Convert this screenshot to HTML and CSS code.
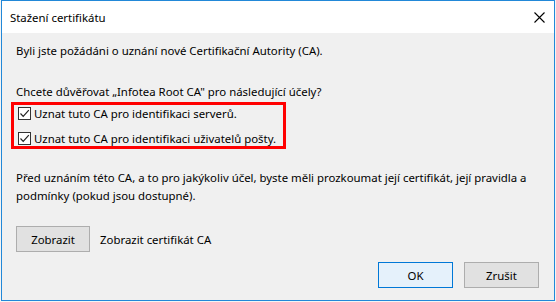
FILE: index.html
```html
<!DOCTYPE html>
<html lang="cs">
<head>
  <meta charset="UTF-8" />
  <meta name="viewport" content="width=device-width, initial-scale=1.0"/>
  <title>Stažení certifikátu</title>
  <link rel="stylesheet" href="styles.css">
</head>
<body>
  <div class="dialog">
    <div class="titlebar">
      <span class="title">Stažení certifikátu</span>
      <svg class="close" width="11" height="11" viewBox="0 0 11 11">
        <path d="M0.5 0.5 L10.5 10.5 M10.5 0.5 L0.5 10.5" stroke="#000" stroke-width="1.1" fill="none"/>
      </svg>
    </div>

    <div class="content">
      <p class="intro">Byli jste požádáni o uznání nové Certifikační Autority (CA).</p>
      <p class="question">Chcete důvěřovat „Infotea Root CA" pro následující účely?</p>

      <div class="highlight">
        <label class="check-row">
          <span class="checkbox">
            <svg width="11" height="11" viewBox="0 0 11 11"><path d="M1.5 5.5 L4.2 8.3 L9.8 2.2" stroke="#222" stroke-width="1.2" fill="none"/></svg>
          </span>
          Uznat tuto CA pro identifikaci serverů.
        </label>
        <label class="check-row">
          <span class="checkbox">
            <svg width="11" height="11" viewBox="0 0 11 11"><path d="M1.5 5.5 L4.2 8.3 L9.8 2.2" stroke="#222" stroke-width="1.2" fill="none"/></svg>
          </span>
          Uznat tuto CA pro identifikaci uživatelů pošty.
        </label>
      </div>

      <p class="note">Před uznáním této CA, a to pro jakýkoliv účel, byste měli prozkoumat její certifikát, její pravidla a podmínky (pokud jsou dostupné).</p>

      <div class="view-row">
        <button class="btn">Zobrazit</button>
        <span>Zobrazit certifikát CA</span>
      </div>

      <div class="actions">
        <button class="btn btn-default">OK</button>
        <button class="btn">Zrušit</button>
      </div>
    </div>
  </div>
</body>
</html>
```
FILE: styles.css
```css
html, body {
  margin: 0;
  padding: 0;
  background: #f4f4f4;
}

body {
  font-family: 'Noto Sans', 'Segoe UI', sans-serif;
  font-size: 11.4px;
  color: #000;
}

.dialog {
  margin-left: 1px;
  width: 554px;
  height: 301px;
  box-sizing: border-box;
  border: 1px solid #2288d8;
  display: flex;
  flex-direction: column;
  background: #f0f0f0;
}

.titlebar {
  height: 31px;
  flex-shrink: 0;
  background: #fff;
  display: flex;
  align-items: center;
  justify-content: space-between;
  padding: 1px 9px 0 8px;
}

.title {
  line-height: 16px;
}

.close {
  display: block;
  margin-right: 0;
}

.content {
  flex: 1;
  padding: 10px 15px 0 14px;
  display: flex;
  flex-direction: column;
}

p {
  margin: 0;
  line-height: 16px;
}

.question {
  margin-top: 25px;
}

.highlight {
  margin-top: 2px;
  margin-left: -5px;
  width: 275px;
  box-sizing: border-box;
  border: 3px solid #f00;
  padding: 0 0 0 4px;
  display: flex;
  flex-direction: column;
  gap: 9px;
}

.check-row {
  display: flex;
  align-items: center;
  gap: 3px;
  height: 16px;
  white-space: nowrap;
}

.checkbox {
  width: 13px;
  height: 13px;
  box-sizing: border-box;
  border: 1px solid #333;
  background: #fff;
  display: flex;
  align-items: center;
  justify-content: center;
}

.checkbox svg {
  display: block;
}

.note {
  margin-top: 20px;
  line-height: 18px;
}

.view-row {
  margin-top: 21px;
  display: flex;
  align-items: center;
  gap: 10px;
}

.btn {
  font: inherit;
  color: #000;
  width: 74px;
  height: 26px;
  padding: 0;
  margin: 0;
  background: #e1e1e1;
  border: 1px solid #adadad;
}

.actions {
  margin-top: 10px;
  display: flex;
  justify-content: flex-end;
  gap: 11px;
}

.actions .btn {
  width: 75px;
}

.btn-default {
  background: #e5f1fb;
  border-color: #0078d7;
}
```
